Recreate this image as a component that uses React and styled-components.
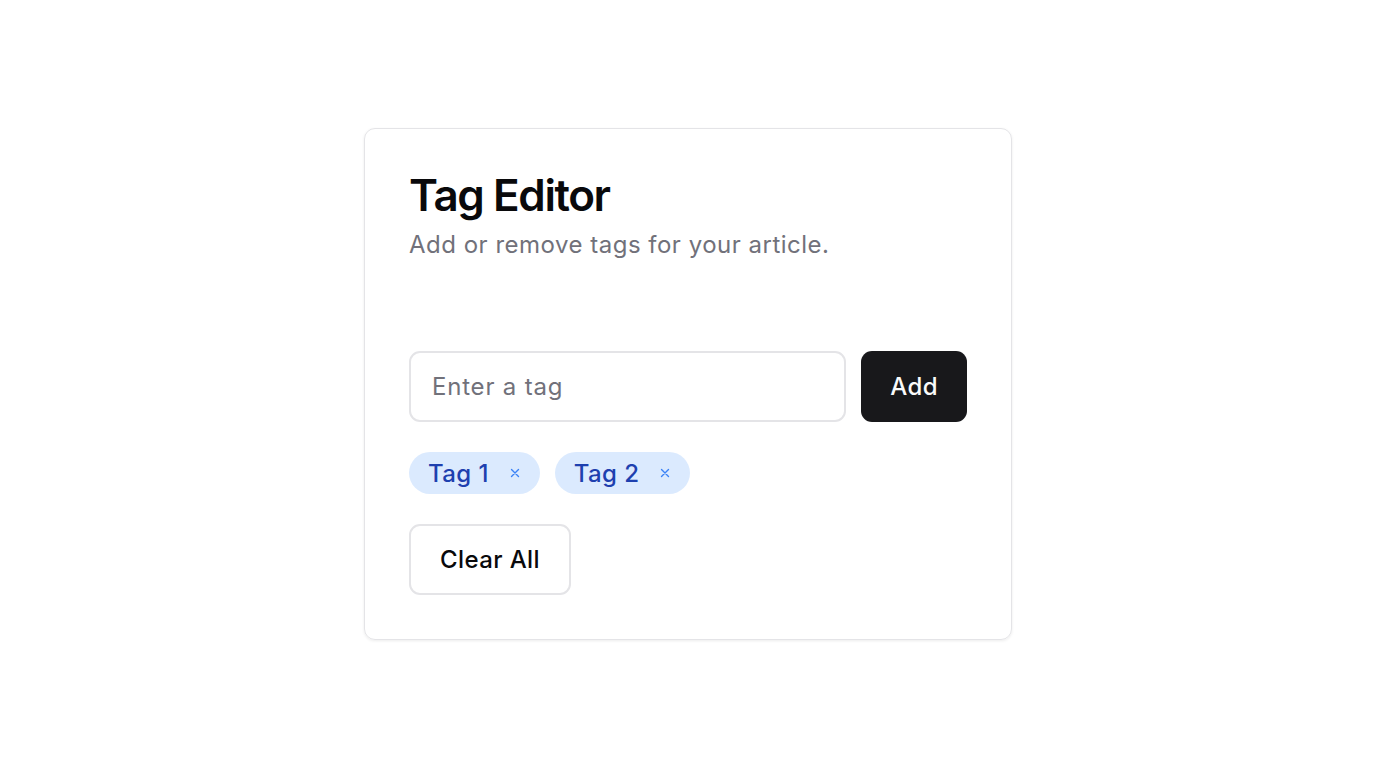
import React, { useState } from "react";
import styled, { createGlobalStyle } from "styled-components";

const GlobalStyle = createGlobalStyle`
  * { box-sizing: border-box; }
  body {
    margin: 0;
    font-family: Inter, "Noto Sans", sans-serif;
    background: #fff;
    color: #09090b;
  }
`;

const Page = styled.div`
  min-height: 100vh;
  display: flex;
  align-items: center;
  justify-content: center;
`;

const Card = styled.div`
  width: 648px;
  border: 1px solid #e4e4e7;
  border-radius: 11px;
  box-shadow: 0 1px 3px rgba(0, 0, 0, 0.08);
  padding: 44px;
`;

const Title = styled.h1`
  margin: 0;
  font-size: 44px;
  font-weight: 600;
  letter-spacing: -1.4px;
  line-height: 44px;
`;

const Subtitle = styled.p`
  margin: 12px 0 0;
  font-size: 24px;
  line-height: 32px;
  letter-spacing: 0.5px;
  color: #71717a;
`;

const InputRow = styled.div`
  display: flex;
  gap: 15px;
  margin-top: 90px;
`;

const Input = styled.input`
  flex: 1;
  height: 71px;
  border: 2px solid #e4e4e7;
  border-radius: 11px;
  padding: 0 21px;
  font-family: inherit;
  font-size: 24px;
  letter-spacing: 0.8px;
  color: #09090b;
  outline: none;
  &::placeholder { color: #71717a; }
`;

const Button = styled.button`
  height: 71px;
  padding: 0 29px;
  border-radius: 11px;
  font-family: inherit;
  font-size: 24px;
  font-weight: 500;
  letter-spacing: 0.4px;
  cursor: pointer;
  border: ${(p) => (p.$outline ? "2px solid #e4e4e7" : "none")};
  background: ${(p) => (p.$outline ? "#fff" : "#18181b")};
  color: ${(p) => (p.$outline ? "#09090b" : "#fafafa")};
`;

const Tags = styled.div`
  display: flex;
  flex-wrap: wrap;
  gap: 15px;
  margin: 30px 0;
`;

const Tag = styled.span`
  display: inline-flex;
  align-items: center;
  height: 42px;
  padding: 0 20px 0 19px;
  border-radius: 999px;
  background: #dbeafe;
  color: #1e40af;
  font-size: 24px;
  font-weight: 500;
  letter-spacing: 0.4px;
`;

const Remove = styled.button`
  display: inline-flex;
  margin-left: 21px;
  border: none;
  background: none;
  padding: 0;
  color: #3b82f6;
  cursor: pointer;
`;

const XIcon = () => (
  <svg width="10" height="10" viewBox="0 0 10 10" fill="none" stroke="currentColor" strokeWidth="1.4" strokeLinecap="round">
    <path d="M1.5 1.5l7 7M8.5 1.5l-7 7" />
  </svg>
);

export default function App() {
  const [tags, setTags] = useState(["Tag 1", "Tag 2"]);
  const [value, setValue] = useState("");

  const add = () => {
    const v = value.trim();
    if (v && !tags.includes(v)) setTags([...tags, v]);
    setValue("");
  };

  return (
    <Page>
      <GlobalStyle />
      <Card>
        <Title>Tag Editor</Title>
        <Subtitle>Add or remove tags for your article.</Subtitle>
        <InputRow>
          <Input
            placeholder="Enter a tag"
            value={value}
            onChange={(e) => setValue(e.target.value)}
            onKeyDown={(e) => e.key === "Enter" && add()}
          />
          <Button onClick={add}>Add</Button>
        </InputRow>
        <Tags>
          {tags.map((t) => (
            <Tag key={t}>
              {t}
              <Remove aria-label={`Remove ${t}`} onClick={() => setTags(tags.filter((x) => x !== t))}>
                <XIcon />
              </Remove>
            </Tag>
          ))}
        </Tags>
        <Button $outline onClick={() => setTags([])}>
          Clear All
        </Button>
      </Card>
    </Page>
  );
}
